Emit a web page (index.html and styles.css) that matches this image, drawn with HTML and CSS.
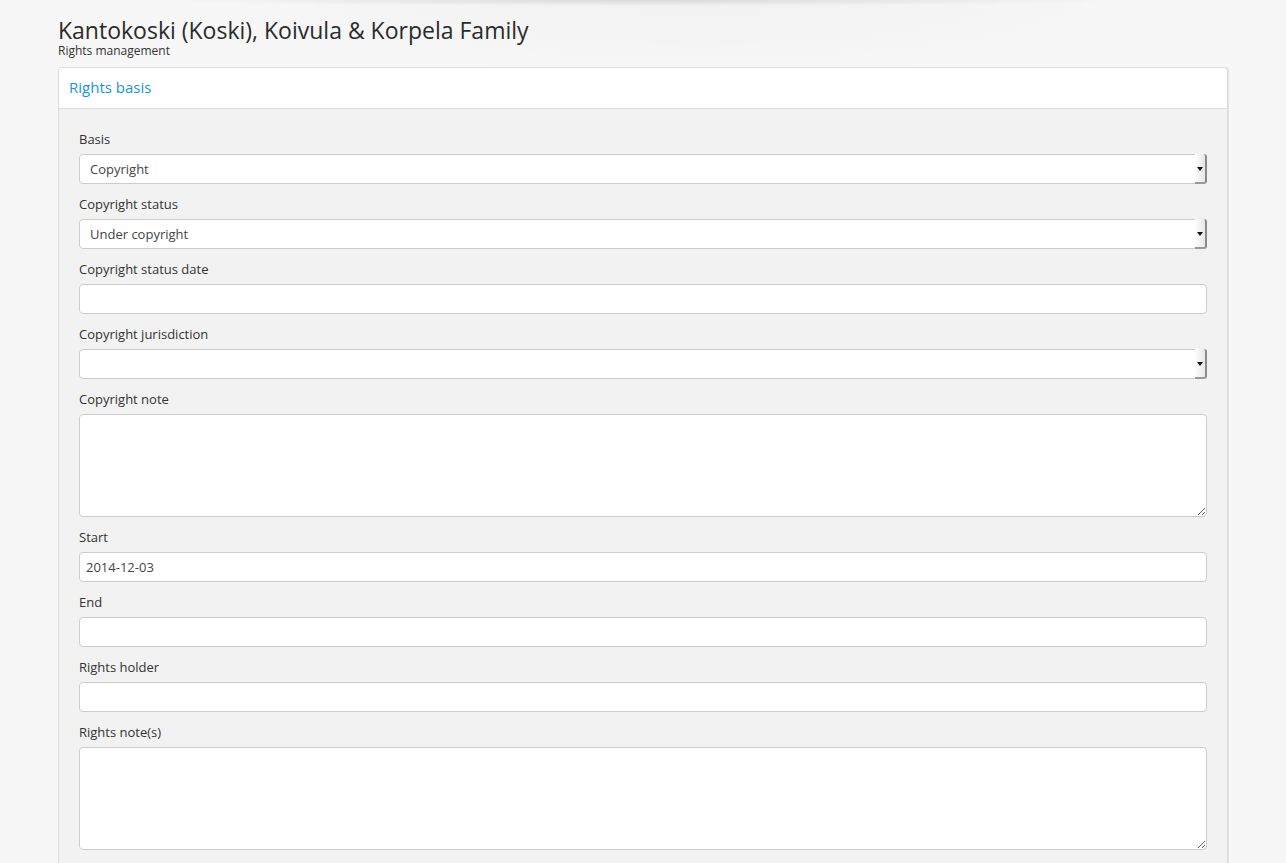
FILE: index.html
```html
<!DOCTYPE html>
<html lang="en">
<head>
  <meta charset="UTF-8" />
  <title>Rights management</title>
  <link rel="stylesheet" href="styles.css">
</head>
<body>
  <div class="top-shade"></div>

  <div class="container">
    <h1 class="page-title">Kantokoski (Koski), Koivula &amp; Korpela Family</h1>
    <div class="page-subtitle">Rights management</div>

    <div class="panel">
      <div class="panel-heading">Rights basis</div>
      <div class="panel-body">
        <div class="form-group">
          <label>Basis</label>
          <div class="select-wrap">
            <select class="form-control select">
              <option>Copyright</option>
            </select>
            <span class="select-arrow"></span>
          </div>
        </div>

        <div class="form-group">
          <label>Copyright status</label>
          <div class="select-wrap">
            <select class="form-control select">
              <option>Under copyright</option>
            </select>
            <span class="select-arrow"></span>
          </div>
        </div>

        <div class="form-group">
          <label>Copyright status date</label>
          <input type="text" class="form-control" value="">
        </div>

        <div class="form-group">
          <label>Copyright jurisdiction</label>
          <div class="select-wrap">
            <select class="form-control select">
              <option></option>
            </select>
            <span class="select-arrow"></span>
          </div>
        </div>

        <div class="form-group">
          <label>Copyright note</label>
          <textarea class="form-control textarea"></textarea>
        </div>

        <div class="form-group">
          <label>Start</label>
          <input type="text" class="form-control" value="2014-12-03">
        </div>

        <div class="form-group">
          <label>End</label>
          <input type="text" class="form-control" value="">
        </div>

        <div class="form-group">
          <label>Rights holder</label>
          <input type="text" class="form-control" value="">
        </div>

        <div class="form-group">
          <label>Rights note(s)</label>
          <textarea class="form-control textarea"></textarea>
        </div>
      </div>
    </div>
  </div>
</body>
</html>
```

FILE: styles.css
```css
html, body {
  margin: 0;
  padding: 0;
  background: #f7f7f7;
  color: #333;
  font-family: 'Open Sans', 'DejaVu Sans', sans-serif;
  font-size: 13px;
  line-height: 20px;
}

/* faint shadow along the top edge */
.top-shade {
  position: absolute;
  top: 0;
  left: 0;
  right: 0;
  height: 90px;
  background:
    radial-gradient(ellipse 480px 6px at 640px 0, rgba(0, 0, 0, 0.10), rgba(0, 0, 0, 0) 100%),
    radial-gradient(ellipse 520px 80px at 700px 0, rgba(0, 0, 0, 0.025), rgba(0, 0, 0, 0) 100%);
  pointer-events: none;
}

.container {
  position: relative;
  width: 1170px;
  margin: 0 auto;
  padding-top: 17px;
}

.page-title {
  margin: 0;
  font-size: 23px;
  font-weight: 400;
  line-height: 26px;
  color: #2b2b2b;
}

.page-subtitle {
  font-size: 12px;
  line-height: 16px;
  color: #333;
  margin-bottom: 8px;
}

.panel {
  background: #f2f2f2;
  border: 1px solid #ddd;
  border-radius: 4px;
  box-shadow: 1px 0 0 #e2e2e2;
}

.panel-heading {
  background: #fff;
  border-bottom: 1px solid #ddd;
  border-radius: 4px 4px 0 0;
  padding: 9px 10px 11px;
  font-size: 15px;
  line-height: 20px;
  color: #1a95d6;
}

.panel-body {
  padding: 20px 20px 10px;
}

.form-group {
  margin-bottom: 10px;
}

.form-group label {
  display: block;
  font-size: 13px;
  line-height: 20px;
  margin-bottom: 5px;
  color: #333;
}

.form-control {
  display: block;
  box-sizing: border-box;
  width: 100%;
  height: 30px;
  margin: 0;
  padding: 4px 6px;
  background: #fff;
  border: 1px solid #ccc;
  border-radius: 4px;
  font-family: inherit;
  font-size: 13px;
  color: #444;
  outline: none;
}

.select-wrap {
  position: relative;
}

.select {
  -webkit-appearance: none;
  appearance: none;
  padding-left: 10px;
}

.select-arrow {
  position: absolute;
  top: 0;
  right: 0;
  width: 12px;
  height: 30px;
  box-sizing: border-box;
  border-right: 2px solid #8a8a8a;
  border-bottom: 2px solid #999;
  border-radius: 0 3px 3px 0;
  background: linear-gradient(to right, #fff, #e6e6e6);
}

.select-arrow::after {
  content: '';
  position: absolute;
  top: 13px;
  left: 2px;
  border-left: 3px solid transparent;
  border-right: 3px solid transparent;
  border-top: 4px solid #111;
}

.textarea {
  height: 103px;
  resize: vertical;
}
```
